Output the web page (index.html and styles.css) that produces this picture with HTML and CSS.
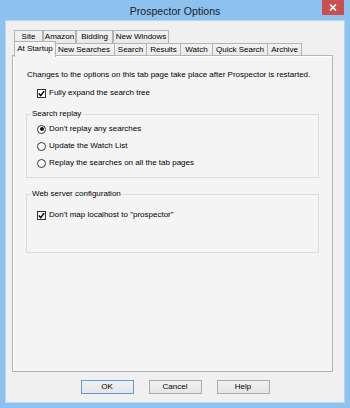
FILE: index.html
```html
<!DOCTYPE html>
<html>
<head>
	<meta charset="utf-8">
	<title>Prospector Options</title>
	<link rel="stylesheet" href="styles.css">
</head>
<body>
	<div class="window">
		<div class="titlebar">
			<span></span>
			<span class="title">Prospector Options</span>
			<span class="close">
				<svg width="8" height="7" viewBox="0 0 8 7"><path d="M1 0.5 L7 6.5 M7 0.5 L1 6.5" stroke="#fff" stroke-width="1.6"/></svg>
			</span>
		</div>
		<div class="client">
			<div class="tabs">
				<div class="tabrow back">
					<span class="tab">Site</span>
					<span class="tab">Amazon</span>
					<span class="tab">Bidding</span>
					<span class="tab">New Windows</span>
				</div>
				<div class="tabrow front">
					<span class="tab active">At Startup</span>
					<span class="tab">New Searches</span>
					<span class="tab">Search</span>
					<span class="tab">Results</span>
					<span class="tab">Watch</span>
					<span class="tab">Quick Search</span>
					<span class="tab">Archive</span>
				</div>
			</div>
			<div class="panel">
				<p class="note">Changes to the options on this tab page take place after Prospector is restarted.</p>
				<div class="opt first">
					<span class="box checked"><svg width="7" height="7" viewBox="0 0 7 7"><path d="M0.8 3.6 L2.7 5.6 L6.2 1.1" stroke="#000" stroke-width="1.5" fill="none"/></svg></span>
					Fully expand the search tree
				</div>
				<fieldset class="group replay">
					<legend>Search replay</legend>
					<div class="opt"><span class="radio on"></span>Don't replay any searches</div>
					<div class="opt"><span class="radio"></span>Update the Watch List</div>
					<div class="opt"><span class="radio"></span>Replay the searches on all the tab pages</div>
				</fieldset>
				<fieldset class="group server">
					<legend>Web server configuration</legend>
					<div class="opt"><span class="box checked"><svg width="7" height="7" viewBox="0 0 7 7"><path d="M0.8 3.6 L2.7 5.6 L6.2 1.1" stroke="#000" stroke-width="1.5" fill="none"/></svg></span>Don't map localhost to "prospector"</div>
				</fieldset>
			</div>
			<div class="buttons">
				<button class="btn default">OK</button>
				<button class="btn">Cancel</button>
				<button class="btn">Help</button>
			</div>
		</div>
	</div>
</body>
</html>
```

FILE: styles.css
```css
body{margin: 0;font-family: "Liberation Sans", Arial, sans-serif;font-size: 8px;color: #000;}
.window{width: 350px;height: 408px;box-sizing: border-box;background-color: #8dc1f0;padding: 0 6px 6px 6px;display: flex;flex-direction: column;}
.titlebar{height: 21px;display: grid;grid-template-columns: 1fr auto 1fr;}
.title{font-size: 10.6px;color: #222;line-height: 23px;}
.close{justify-self: end;width: 22px;height: 15px;background-color: #c75050;display: flex;align-items: center;justify-content: center;}
.close svg{display: block;}
.client{flex: 1;background-color: #f0f0f0;padding: 9px 11px 0 6px;display: flex;flex-direction: column;box-shadow: 0 0 0 1px #b9d7f3;}
.tabs{height: 25px;padding-left: 2px;}
.tabrow{display: grid;}
.tabrow.back{height: 13px;grid-template-columns: 29px 33px 37px 56px;}
.tabrow.front{height: 12px;grid-template-columns: 40px 61px 32px 34px 32px 55px 34px;}
.tab{border: 1px solid #b4b4b4;border-bottom: none;background: linear-gradient(#f2f2f2, #e9e9e9);text-align: center;line-height: 12px;white-space: nowrap;}
.back .tab{line-height: 12px;}
.front .tab{margin-left: -1px;}
.front .tab:first-child{margin-left: 0;}
.tab.active{position: relative;z-index: 1;margin: -2px -2px -1px -2px;background: #f4f4f4;line-height: 14px;}
.panel{height: 317px;box-sizing: border-box;border: 1px solid #b4b4b4;background-color: #f4f4f4;box-shadow: 1px 1px 0 #fff inset;}
.note{margin: 14px 0 0 14px;line-height: 10px;}
.opt{display: flex;align-items: center;height: 10px;line-height: 10px;gap: 3px;white-space: nowrap;}
.opt.first{margin: 8px 0 0 24px;}
.box{width: 9px;height: 9px;box-sizing: border-box;border: 1px solid #333;background-color: #fff;display: flex;align-items: center;justify-content: center;}
.box svg{display: block;}
.radio{width: 9px;height: 9px;box-sizing: border-box;border: 1px solid #333;border-radius: 50%;background-color: #fff;display: flex;align-items: center;justify-content: center;}
.radio.on::after{content: "";width: 4px;height: 4px;border-radius: 50%;background-color: #111;}
.group{margin: 11px 13px 0 13px;border: 1px solid #dcdcdc;padding: 0 0 9px 4px;min-width: 0;}
.group legend{padding: 0 1px;line-height: 10px;}
.group .opt{margin: 7px 0 0 6px;}
.group .opt:first-of-type{margin-top: 5px;}
.server{padding-bottom: 32px;}
.server .opt:first-of-type{margin-top: 11px;}
.buttons{display: flex;justify-content: center;gap: 15px;margin-top: 8px;padding-left: 5px;}
.btn{width: 53px;height: 14px;box-sizing: border-box;padding: 0;font-family: inherit;font-size: 8px;color: #000;border: 1px solid #acacac;background: linear-gradient(#f0f0f0, #e5e5e5);line-height: 12px;}
.btn.default{border-color: #5a9ee2;}
```
